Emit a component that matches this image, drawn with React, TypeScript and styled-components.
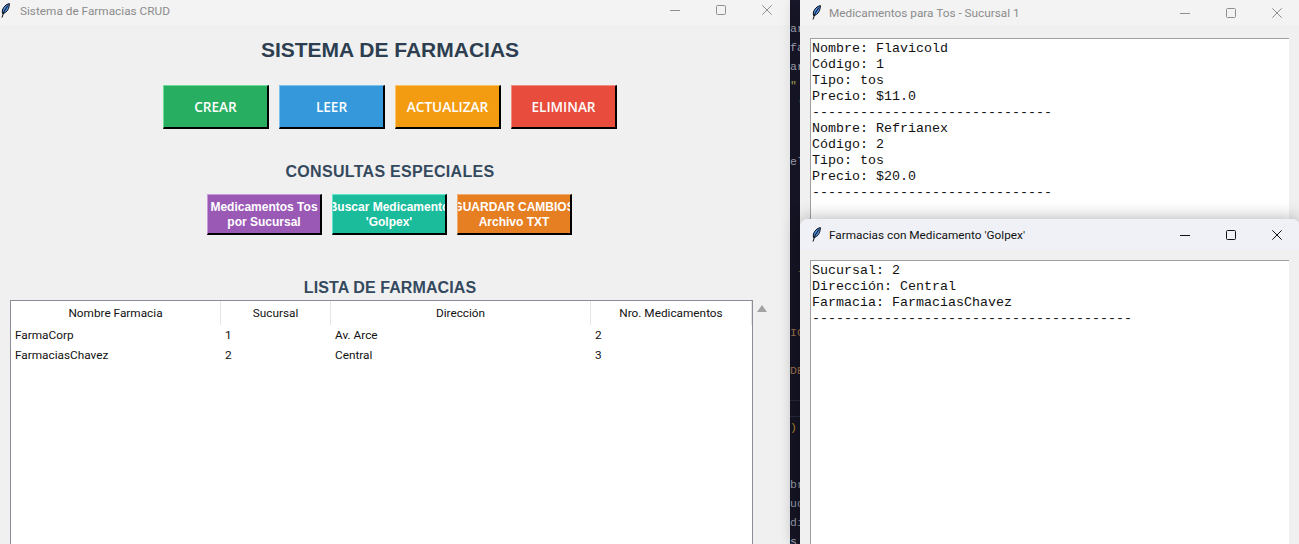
import React from "react";
import styled, { createGlobalStyle } from "styled-components";

const GlobalStyle = createGlobalStyle`
    html, body {
        margin: 0;
        padding: 0;
        overflow: hidden;
        background: #1a1a2e;
    }
`;

const Desktop = styled.div`
    position: relative;
    width: 1299px;
    height: 544px;
    overflow: hidden;
    background: #1a1a2e;
`;

const CodePeek = styled.div`
    position: absolute;
    left: 790px;
    top: 0;
    width: 10px;
    padding-top: 19px;
    overflow: hidden;
    font-family: "Liberation Mono", monospace;
    font-size: 11.5px;
    line-height: 19px;
    white-space: pre;
`;

const CodeLine = styled.div<{ $color?: string }>`
    height: 19px;
    color: ${(p) => p.$color || "#b9bdcc"};
`;

const CodeRule = styled.div<{ $y: number }>`
    position: absolute;
    left: 790px;
    top: ${(p) => p.$y}px;
    width: 10px;
    height: 1px;
    background: #33344a;
`;

const Window = styled.section<{ $x: number; $y: number; $w: number; $h: number; $rounded?: boolean; $z: number }>`
    position: absolute;
    left: ${(p) => p.$x}px;
    top: ${(p) => p.$y}px;
    width: ${(p) => p.$w}px;
    height: ${(p) => p.$h}px;
    z-index: ${(p) => p.$z};
    display: flex;
    flex-direction: column;
    background: #f0f0f0;
    border-radius: ${(p) => (p.$rounded ? "8px 8px 0 0" : "0")};
    box-shadow: 0 0 18px rgba(0, 0, 0, 0.32);
    overflow: hidden;
`;

const TitleBar = styled.header<{ $height: number; $active?: boolean; $pad: number; $lift?: number }>`
    flex: none;
    box-sizing: border-box;
    height: ${(p) => p.$height}px;
    display: flex;
    align-items: center;
    padding-left: ${(p) => p.$pad}px;
    padding-bottom: ${(p) => p.$lift || 0}px;
    background: ${(p) => (p.$active ? "#eff1f7" : "#f3f3f3")};
    color: ${(p) => (p.$active ? "#111" : "#8b8b8b")};
    font-family: Roboto, "Noto Sans", sans-serif;
    font-size: 11.8px;
`;

const TitleText = styled.span<{ $gap: number; $drop?: number }>`
    flex: 1;
    margin-left: ${(p) => p.$gap}px;
    padding-top: ${(p) => p.$drop || 0}px;
    white-space: nowrap;
`;

const Controls = styled.div`
    display: flex;
    align-items: center;
    height: 100%;
`;

const ControlSlot = styled.div`
    width: 46px;
    height: 100%;
    display: flex;
    align-items: center;
    justify-content: center;
`;

const MainBody = styled.div`
    flex: 1;
    min-height: 0;
    display: flex;
    flex-direction: column;
    align-items: center;
    padding: 13px 20px 0 10px;
`;

const MainTitle = styled.h1`
    margin: 0;
    height: 24px;
    line-height: 24px;
    font-family: "Liberation Sans", Arial, sans-serif;
    font-size: 21px;
    font-weight: 700;
    color: #2c3e50;
`;

const SectionTitle = styled.h2<{ $gap: number; $spacing: number }>`
    margin: ${(p) => p.$gap}px 0 0;
    height: 18px;
    line-height: 18px;
    font-family: "Liberation Sans", Arial, sans-serif;
    font-size: 16px;
    font-weight: 700;
    letter-spacing: ${(p) => p.$spacing}px;
    color: #34495e;
`;

const ButtonRow = styled.div<{ $gap: number }>`
    display: flex;
    gap: 10px;
    margin-top: ${(p) => p.$gap}px;
`;

const QueryRow = styled(ButtonRow)`
    padding-right: 1px;
`;

const RaisedButton = styled.button<{ $bg: string; $light: string }>`
    box-sizing: border-box;
    padding: 0;
    display: flex;
    flex-direction: column;
    align-items: center;
    justify-content: center;
    overflow: hidden;
    color: #fff;
    background: ${(p) => p.$bg};
    border-style: solid;
    border-width: 1px 2px 2px 1px;
    border-color: ${(p) => p.$light} #000 #000 ${(p) => p.$light};
    white-space: nowrap;
`;

const CrudButton = styled(RaisedButton)`
    width: 106px;
    height: 44px;
    font-family: "Open Sans", "Noto Sans", sans-serif;
    font-size: 13.6px;
    font-weight: 600;
`;

const QueryButton = styled(RaisedButton)`
    width: 115px;
    height: 41px;
    padding-top: 2px;
    font-family: "Liberation Sans", Arial, sans-serif;
    font-size: 12px;
    font-weight: 700;
    line-height: 15px;
`;

const QueryLine = styled.span`
    flex: none;
`;

const TableArea = styled.div`
    flex: 1;
    min-height: 0;
    align-self: stretch;
    display: flex;
    margin-top: 3px;
`;

const TableBox = styled.div`
    box-sizing: border-box;
    flex: none;
    width: 743px;
    height: 300px;
    background: #fff;
    border: 1px solid #8c8c96;
`;

const Table = styled.table`
    width: 100%;
    table-layout: fixed;
    border-collapse: separate;
    border-spacing: 0;
    font-family: Roboto, "Noto Sans", sans-serif;
    font-size: 11.8px;
    color: #111;
`;

const Th = styled.th<{ $w?: number }>`
    box-sizing: border-box;
    width: ${(p) => (p.$w ? `${p.$w}px` : "auto")};
    height: 24px;
    padding: 0 0 1px;
    font-weight: 400;
    text-align: center;
    border-right: 1px solid #e5e5e5;
`;

const Td = styled.td`
    box-sizing: border-box;
    height: 20px;
    padding: 0 0 1px 4px;
`;

const ScrollColumn = styled.div`
    flex: none;
    width: 17px;
    display: flex;
    justify-content: center;
    padding-top: 5px;
`;

const TextPane = styled.div<{ $top: number }>`
    flex: 1;
    box-sizing: border-box;
    margin: ${(p) => p.$top}px 11px 0 10px;
    padding: 2px 1px;
    background: #fff;
    border: 1px solid #a0a0a0;
    border-width: 1px 0 0 1px;
    font-family: "Liberation Mono", "Courier New", monospace;
    font-size: 13.33px;
    line-height: 16px;
    color: #111;
    white-space: pre;
`;

function Feather() {
    return (
        <svg width="9" height="15" viewBox="0 0 9 15">
            <path d="M8.4 .6C5 1.3 2.4 3.8 1.5 7c-.4 1.4-.3 2.7.1 3.7l1.1-.3C5.5 9.4 7.6 6.6 8.1 3.3c.2-.9.3-1.8.3-2.7z" fill="#4d8fe0" stroke="#0b0b12" strokeWidth="1" />
            <path d="M6.8 2.6 3.2 8.2 1 14.5" fill="none" stroke="#0b0b12" strokeWidth="1" />
        </svg>
    );
}

function WinControls({ color }: { color: string }) {
    return (
        <Controls>
            <ControlSlot>
                <svg width="10" height="10" viewBox="0 0 10 10">
                    <path d="M0 5.5H10" stroke={color} strokeWidth="1" />
                </svg>
            </ControlSlot>
            <ControlSlot>
                <svg width="10" height="10" viewBox="0 0 10 10">
                    <rect x=".5" y=".5" width="9" height="9" rx="1" fill="none" stroke={color} strokeWidth="1" />
                </svg>
            </ControlSlot>
            <ControlSlot>
                <svg width="10" height="10" viewBox="0 0 10 10">
                    <path d="M.3.3 9.7 9.7M9.7.3.3 9.7" stroke={color} strokeWidth="1" />
                </svg>
            </ControlSlot>
        </Controls>
    );
}

const codeLines: [string, string?][] = [
    ["ar"],
    ["fa"],
    ["ar"],
    ['"', "#c9c26a"],
    [" '", "#c9c26a"],
    [""],
    [""],
    ["el"],
    [""],
    [""],
    [""],
    [""],
    [""],
    [" l", "#a8844c"],
    [""],
    [""],
    ["IC", "#c08a5c"],
    [""],
    ["DE", "#c08a5c"],
    [""],
    [""],
    [")", "#d8a02c"],
    [""],
    [""],
    ["br"],
    ["uc"],
    ["di"],
    ["s"],
];

const farmacias = [
    { nombre: "FarmaCorp", sucursal: 1, direccion: "Av. Arce", medicamentos: 2 },
    { nombre: "FarmaciasChavez", sucursal: 2, direccion: "Central", medicamentos: 3 },
];

const tosText = `Nombre: Flavicold
Código: 1
Tipo: tos
Precio: $11.0
${"-".repeat(30)}
Nombre: Refrianex
Código: 2
Tipo: tos
Precio: $20.0
${"-".repeat(30)}`;

const golpexText = `Sucursal: 2
Dirección: Central
Farmacia: FarmaciasChavez
${"-".repeat(40)}`;

export default function App() {
    return (
        <Desktop>
            <GlobalStyle />
            <CodePeek>
                {codeLines.map(([text, color], i) => (
                    <CodeLine key={i} $color={color}>
                        {text}
                    </CodeLine>
                ))}
            </CodePeek>
            <CodeRule $y={400} />
            <CodeRule $y={416} />

            <Window $x={0} $y={0} $w={790} $h={544} $z={1}>
                <TitleBar $height={25} $pad={1} $lift={5}>
                    <Feather />
                    <TitleText $gap={10} $drop={2}>Sistema de Farmacias CRUD</TitleText>
                    <WinControls color="#8f8f8f" />
                </TitleBar>
                <MainBody>
                    <MainTitle>SISTEMA DE FARMACIAS</MainTitle>
                    <ButtonRow $gap={23}>
                        <CrudButton $bg="#27ae60" $light="#6fdc9a">CREAR</CrudButton>
                        <CrudButton $bg="#3498db" $light="#7cc0f0">LEER</CrudButton>
                        <CrudButton $bg="#f39c12" $light="#f8c36a">ACTUALIZAR</CrudButton>
                        <CrudButton $bg="#e74c3c" $light="#f28c80">ELIMINAR</CrudButton>
                    </ButtonRow>
                    <SectionTitle $gap={34} $spacing={0.3}>CONSULTAS ESPECIALES</SectionTitle>
                    <QueryRow $gap={13}>
                        <QueryButton $bg="#9b59b6" $light="#c79bdb">
                            <QueryLine>Medicamentos Tos</QueryLine>
                            <QueryLine>por Sucursal</QueryLine>
                        </QueryButton>
                        <QueryButton $bg="#1abc9c" $light="#5fe6cb">
                            <QueryLine>Buscar Medicamento</QueryLine>
                            <QueryLine>'Golpex'</QueryLine>
                        </QueryButton>
                        <QueryButton $bg="#e67e22" $light="#f2ae70">
                            <QueryLine>GUARDAR CAMBIOS</QueryLine>
                            <QueryLine>Archivo TXT</QueryLine>
                        </QueryButton>
                    </QueryRow>
                    <SectionTitle $gap={44} $spacing={0.1}>LISTA DE FARMACIAS</SectionTitle>
                    <TableArea>
                        <TableBox>
                            <Table>
                                <thead>
                                    <tr>
                                        <Th $w={210}>Nombre Farmacia</Th>
                                        <Th $w={110}>Sucursal</Th>
                                        <Th $w={260}>Dirección</Th>
                                        <Th>Nro. Medicamentos</Th>
                                    </tr>
                                </thead>
                                <tbody>
                                    {farmacias.map((f) => (
                                        <tr key={f.nombre}>
                                            <Td>{f.nombre}</Td>
                                            <Td>{f.sucursal}</Td>
                                            <Td>{f.direccion}</Td>
                                            <Td>{f.medicamentos}</Td>
                                        </tr>
                                    ))}
                                </tbody>
                            </Table>
                        </TableBox>
                        <ScrollColumn>
                            <svg width="10" height="7" viewBox="0 0 10 7">
                                <path d="M5 0 10 7H0z" fill="#a3a3a3" />
                            </svg>
                        </ScrollColumn>
                    </TableArea>
                </MainBody>
            </Window>

            <Window $x={800} $y={0} $w={500} $h={544} $z={2}>
                <TitleBar $height={25} $pad={12}>
                    <Feather />
                    <TitleText $gap={8}>Medicamentos para Tos - Sucursal 1</TitleText>
                    <WinControls color="#8f8f8f" />
                </TitleBar>
                <TextPane $top={13}>{tosText}</TextPane>
            </Window>

            <Window $x={800} $y={219} $w={500} $h={325} $rounded $z={3}>
                <TitleBar $height={31} $pad={12} $active>
                    <Feather />
                    <TitleText $gap={8}>Farmacias con Medicamento 'Golpex'</TitleText>
                    <WinControls color="#111" />
                </TitleBar>
                <TextPane $top={10}>{golpexText}</TextPane>
            </Window>
        </Desktop>
    );
}
